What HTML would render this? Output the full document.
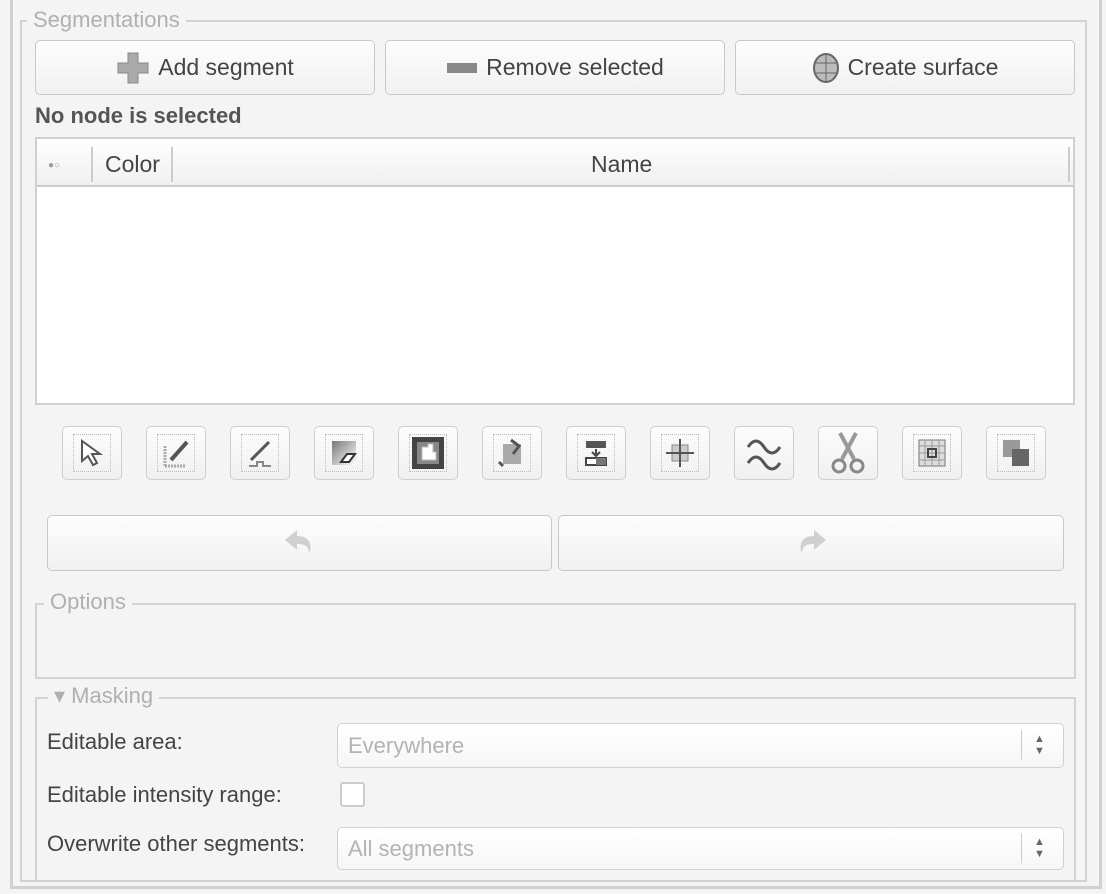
<!DOCTYPE html><html><head><style>
body{margin:0;width:1106px;height:894px;background:#f4f4f4;font-family:"Liberation Sans",sans-serif;position:relative;overflow:hidden;color:#444}
.a{position:absolute;box-sizing:border-box}
.gb{border:2px solid #d2d2d2;}
.lbl{position:absolute;background:#f4f4f4;color:#b0b0b0;font-size:22px;padding:0 6px;line-height:24px}
.btn{border:1px solid #c8c8c8;border-radius:5px;background:linear-gradient(#fdfdfd,#f1f1f1);font-size:23px;color:#444;display:flex;align-items:center;justify-content:center;gap:8px}
.tb{box-sizing:border-box;width:60px;height:54px;border:1px solid #cfcfcf;border-radius:5px;background:linear-gradient(#fcfcfc,#f0f0f0);display:flex;align-items:center;justify-content:center}
.tb i{display:block;width:38px;height:38px;border:1px dotted #bbb;box-sizing:border-box;display:flex;align-items:center;justify-content:center}
.cb{border:1px solid #d0d0d0;border-radius:5px;background:linear-gradient(#fff,#f6f6f6);color:#b3b3b3;font-size:22px;padding-left:10px;display:flex;align-items:center}
.fl{font-size:22px;color:#444}
</style></head><body>
<div class="a" style="left:10px;top:0;width:3px;height:889px;background:#d0d0d0"></div>
<div class="a" style="left:1099px;top:0;width:3px;height:889px;background:#d0d0d0"></div>
<div class="a" style="left:10px;top:886px;width:1092px;height:3px;background:#d0d0d0"></div>
<div class="a gb" style="left:20px;top:20px;width:1067px;height:862px"></div>
<div class="lbl" style="left:27px;top:8px">Segmentations</div>

<div class="a btn" style="left:35px;top:40px;width:340px;height:55px"><svg width="34" height="34"><path d="M12 2h10v10h10v10H22v10H12V22H2V12h10z" fill="#aaa" stroke="#888"/></svg>Add segment</div>
<div class="a btn" style="left:385px;top:40px;width:340px;height:55px"><svg width="32" height="12"><rect x="1" y="1" width="30" height="10" fill="#888"/></svg>Remove selected</div>
<div class="a btn" style="left:735px;top:40px;width:340px;height:55px"><svg width="28" height="30"><ellipse cx="14" cy="15" rx="12" ry="14" fill="#bbb" stroke="#666" stroke-width="2"/><path d="M4 10h20M4 20h20M14 1v28" stroke="#666"/></svg>Create surface</div>

<div class="a" style="left:35px;top:103px;font-weight:bold;font-size:22px;color:#555">No node is selected</div>

<div class="a" style="left:35px;top:137px;width:1040px;height:268px;border:2px solid #d0d0d0;background:#fff"></div>
<div class="a" style="left:37px;top:139px;width:1036px;height:48px;background:linear-gradient(#fff,#f0f0f0);border-bottom:2px solid #ccc"></div>
<div class="a" style="left:48px;top:160px;font-size:10px;color:#999">●○</div>
<div class="a" style="left:91px;top:147px;width:2px;height:35px;background:#ccc"></div>
<div class="a fl" style="left:105px;top:151px;font-size:23px">Color</div>
<div class="a" style="left:171px;top:147px;width:2px;height:35px;background:#ccc"></div>
<div class="a fl" style="left:591px;top:151px;font-size:23px">Name</div>
<div class="a" style="left:1068px;top:147px;width:2px;height:35px;background:#ccc"></div>

<div class="a" style="left:62px;top:426px;display:flex;gap:24px">
<div class="tb"><i><svg width="30" height="30"><path d="M5 3l0 20 6-5 5 9 4-2-5-9 8 0z" fill="#fff" stroke="#555" stroke-width="2"/></svg></i></div>
<div class="tb"><i><svg width="30" height="30"><path d="M4 28V8M4 28h20" stroke="#aaa" stroke-width="3" stroke-dasharray="2 1"/><path d="M10 22L26 4" stroke="#555" stroke-width="4"/></svg></i></div>
<div class="tb"><i><svg width="30" height="30"><path d="M6 22L24 4" stroke="#555" stroke-width="3"/><path d="M4 28h8v-4h6v4h8" stroke="#888" stroke-width="2" fill="none"/></svg></i></div>
<div class="tb"><i><svg width="30" height="30"><defs><linearGradient id="g" x1="0" y1="0" x2="1" y2="1"><stop offset="0" stop-color="#777"/><stop offset="1" stop-color="#fff"/></linearGradient></defs><rect x="3" y="3" width="24" height="24" fill="url(#g)"/><path d="M12 24l6-8h8l-6 8z" fill="#fff" stroke="#333" stroke-width="2"/></svg></i></div>
<div class="tb"><i><svg width="32" height="32"><rect x="0" y="0" width="32" height="32" fill="#444"/><rect x="5" y="5" width="22" height="22" fill="#888"/><path d="M10 10h6v-3h5v8h3v8H10z" fill="#fff" stroke="#bbb"/></svg></i></div>
<div class="tb"><i><svg width="30" height="30"><rect x="6" y="6" width="18" height="20" fill="#aaa"/><path d="M14 2l8 6-6 8M6 28l-4-4" stroke="#555" stroke-width="3" fill="none"/></svg></i></div>
<div class="tb"><i><svg width="30" height="30"><rect x="5" y="3" width="20" height="7" fill="#555"/><path d="M15 11v5M11 14l4 4 4-4" stroke="#444" stroke-width="2" fill="none"/><rect x="5" y="20" width="20" height="7" fill="#fff" stroke="#444" stroke-width="2"/><rect x="15" y="20" width="10" height="7" fill="#777"/></svg></i></div>
<div class="tb"><i><svg width="30" height="30"><rect x="7" y="7" width="16" height="16" fill="#ccc" stroke="#888"/><path d="M15 1v28M1 15h28" stroke="#555" stroke-width="2"/></svg></i></div>
<div class="tb"><svg width="40" height="40"><path d="M4 14q8-12 16 0t16 0M4 30q8-12 16 0t16 0" stroke="#555" stroke-width="3" fill="none"/></svg></div>
<div class="tb"><svg width="40" height="44"><path d="M12 2l14 26M28 2L14 28" stroke="#999" stroke-width="4"/><circle cx="11" cy="35" r="6" fill="none" stroke="#888" stroke-width="3"/><circle cx="29" cy="35" r="6" fill="none" stroke="#888" stroke-width="3"/></svg></div>
<div class="tb"><i><svg width="30" height="30"><rect x="2" y="2" width="26" height="26" fill="#ddd" stroke="#777"/><path d="M8 2v26M15 2v26M22 2v26M2 8h26M2 15h26M2 22h26" stroke="#999"/><rect x="11" y="11" width="8" height="8" fill="none" stroke="#444" stroke-width="2"/></svg></i></div>
<div class="tb"><i><svg width="30" height="30"><rect x="2" y="2" width="17" height="17" fill="#999"/><rect x="11" y="11" width="17" height="17" fill="#666"/></svg></i></div>
</div>

<div class="a btn" style="left:47px;top:515px;width:505px;height:56px"><svg width="34" height="34"><path d="M14 4L2 14l12 10v-6c8 0 12 2 12 10 4-10 0-18-12-18z" fill="#d0d0d0"/></svg></div>
<div class="a btn" style="left:558px;top:515px;width:506px;height:56px"><svg width="34" height="34"><path d="M20 4l12 10-12 10v-6c-8 0-12 2-12 10-4-10 0-18 12-18z" fill="#d0d0d0"/></svg></div>

<div class="a gb" style="left:35px;top:603px;width:1041px;height:76px"></div>
<div class="lbl" style="left:44px;top:590px">Options</div>

<div class="a gb" style="left:35px;top:697px;width:1041px;height:185px"></div>
<div class="lbl" style="left:48px;top:684px">▾ Masking</div>

<div class="a fl" style="left:47px;top:729px">Editable area:</div>
<div class="a cb" style="left:337px;top:723px;width:727px;height:45px">Everywhere</div>
<div class="a" style="left:1021px;top:730px;width:1px;height:30px;background:#ccc"></div>
<div class="a" style="left:1034px;top:733px;font-size:11px;line-height:12px;color:#666">▲<br>▼</div>

<div class="a fl" style="left:47px;top:782px">Editable intensity range:</div>
<div class="a" style="left:340px;top:782px;width:25px;height:25px;border:2px solid #ccc;border-radius:3px;background:#fff"></div>

<div class="a fl" style="left:47px;top:831px">Overwrite other segments:</div>
<div class="a cb" style="left:337px;top:827px;width:727px;height:43px">All segments</div>
<div class="a" style="left:1021px;top:833px;width:1px;height:30px;background:#ccc"></div>
<div class="a" style="left:1034px;top:836px;font-size:11px;line-height:12px;color:#666">▲<br>▼</div>
</body></html>
